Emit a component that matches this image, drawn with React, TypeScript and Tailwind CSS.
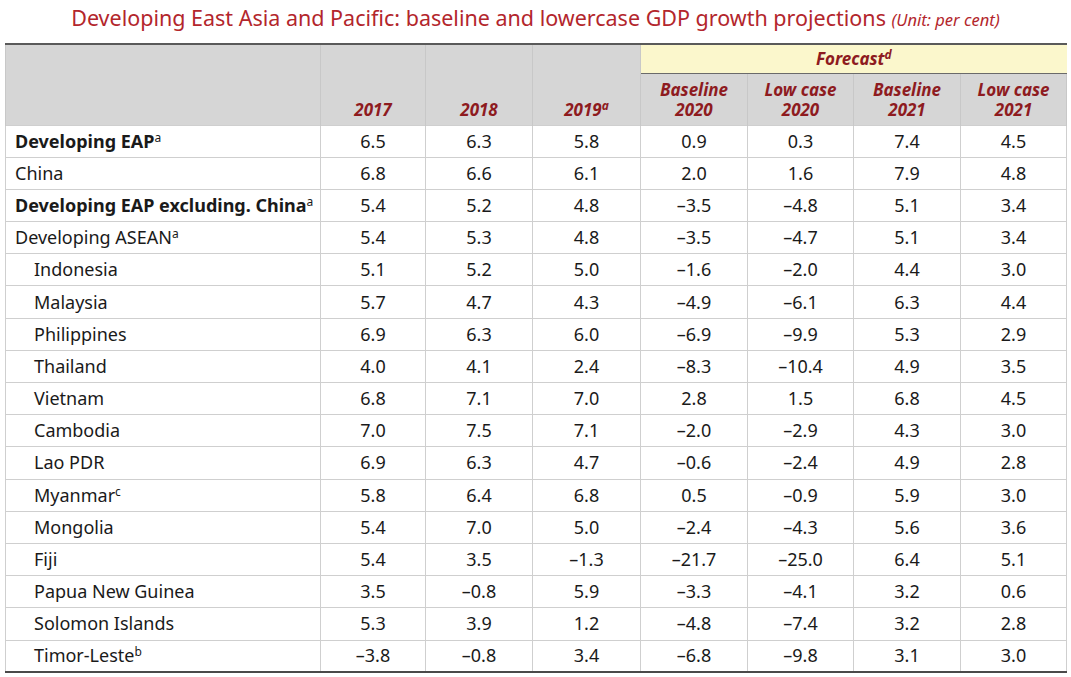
import React from 'react';

type Row = { label: string; sup?: string; bold?: boolean; indent?: boolean; v: string[] };

const rows: Row[] = [
  { label: 'Developing EAP', sup: 'a', bold: true, v: ['6.5', '6.3', '5.8', '0.9', '0.3', '7.4', '4.5'] },
  { label: 'China', v: ['6.8', '6.6', '6.1', '2.0', '1.6', '7.9', '4.8'] },
  { label: 'Developing EAP excluding. China', sup: 'a', bold: true, v: ['5.4', '5.2', '4.8', '–3.5', '–4.8', '5.1', '3.4'] },
  { label: 'Developing ASEAN', sup: 'a', v: ['5.4', '5.3', '4.8', '–3.5', '–4.7', '5.1', '3.4'] },
  { label: 'Indonesia', indent: true, v: ['5.1', '5.2', '5.0', '–1.6', '–2.0', '4.4', '3.0'] },
  { label: 'Malaysia', indent: true, v: ['5.7', '4.7', '4.3', '–4.9', '–6.1', '6.3', '4.4'] },
  { label: 'Philippines', indent: true, v: ['6.9', '6.3', '6.0', '–6.9', '–9.9', '5.3', '2.9'] },
  { label: 'Thailand', indent: true, v: ['4.0', '4.1', '2.4', '–8.3', '–10.4', '4.9', '3.5'] },
  { label: 'Vietnam', indent: true, v: ['6.8', '7.1', '7.0', '2.8', '1.5', '6.8', '4.5'] },
  { label: 'Cambodia', indent: true, v: ['7.0', '7.5', '7.1', '–2.0', '–2.9', '4.3', '3.0'] },
  { label: 'Lao PDR', indent: true, v: ['6.9', '6.3', '4.7', '–0.6', '–2.4', '4.9', '2.8'] },
  { label: 'Myanmar', sup: 'c', indent: true, v: ['5.8', '6.4', '6.8', '0.5', '–0.9', '5.9', '3.0'] },
  { label: 'Mongolia', indent: true, v: ['5.4', '7.0', '5.0', '–2.4', '–4.3', '5.6', '3.6'] },
  { label: 'Fiji', indent: true, v: ['5.4', '3.5', '–1.3', '–21.7', '–25.0', '6.4', '5.1'] },
  { label: 'Papua New Guinea', indent: true, v: ['3.5', '–0.8', '5.9', '–3.3', '–4.1', '3.2', '0.6'] },
  { label: 'Solomon Islands', indent: true, v: ['5.3', '3.9', '1.2', '–4.8', '–7.4', '3.2', '2.8'] },
  { label: 'Timor-Leste', sup: 'b', indent: true, v: ['–3.8', '–0.8', '3.4', '–6.8', '–9.8', '3.1', '3.0'] },
];

const hd = 'bg-[#d6d6d6] border-x border-[#c8c8c8] text-[#8e1b1f] font-bold italic text-[17px] leading-[20px] text-center align-bottom pb-[5px]';

export default function App() {
  return (
    <div className="w-[1071px] h-[677px] bg-white font-['Noto_Sans',sans-serif] text-[#1a1a1a]">
      <h1 className="text-center text-[21.5px] leading-[26px] pt-[5px] text-[#b3262c]">
        Developing East Asia and Pacific: baseline and lowercase GDP growth projections{' '}
        <span className="italic text-[16.5px]">(Unit: per cent)</span>
      </h1>
      <table className="ml-[5px] mt-[10px] w-[1061px] border-collapse table-fixed border-t-2 border-b-2 border-t-[#5a5a5a] border-b-[#4a4a4a]">
        <colgroup>
          <col className="w-[315px]" />
          <col className="w-[105px]" />
          <col className="w-[107px]" />
          <col className="w-[108px]" />
          <col className="w-[107px]" />
          <col className="w-[106px]" />
          <col className="w-[107px]" />
          <col className="w-[106px]" />
        </colgroup>
        <thead>
          <tr className="h-[29px]">
            <th rowSpan={2} className="bg-[#d6d6d6] border-l border-r border-[#c8c8c8]" />
            <th rowSpan={2} className={hd}>2017</th>
            <th rowSpan={2} className={hd}>2018</th>
            <th rowSpan={2} className={hd}>
              2019<sup className="text-[12px]">a</sup>
            </th>
            <th colSpan={4} className="bg-[#fbf7cc] border-b border-b-[#6a6a6a] text-[#8e1b1f] font-bold italic text-[17px] text-center align-middle">
              Forecast<sup className="text-[12px]">d</sup>
            </th>
          </tr>
          <tr className="h-[52px]">
            <th className={hd}>Baseline<br />2020</th>
            <th className={hd}>Low case<br />2020</th>
            <th className={hd}>Baseline<br />2021</th>
            <th className={hd}>Low case<br />2021</th>
          </tr>
        </thead>
        <tbody>
          {rows.map((r) => (
            <tr key={r.label} className="h-[32.2px] text-[18px]">
              <td className={`border border-[#cfcfcf] whitespace-nowrap ${r.indent ? 'pl-[28px]' : 'pl-[9px]'} ${r.bold ? 'font-bold' : ''}`}>
                {r.label}
                {r.sup && <sup className="text-[12px] font-normal">{r.sup}</sup>}
              </td>
              {r.v.map((x, i) => (
                <td key={i} className="border border-[#cfcfcf] text-center">{x}</td>
              ))}
            </tr>
          ))}
        </tbody>
      </table>
    </div>
  );
}
